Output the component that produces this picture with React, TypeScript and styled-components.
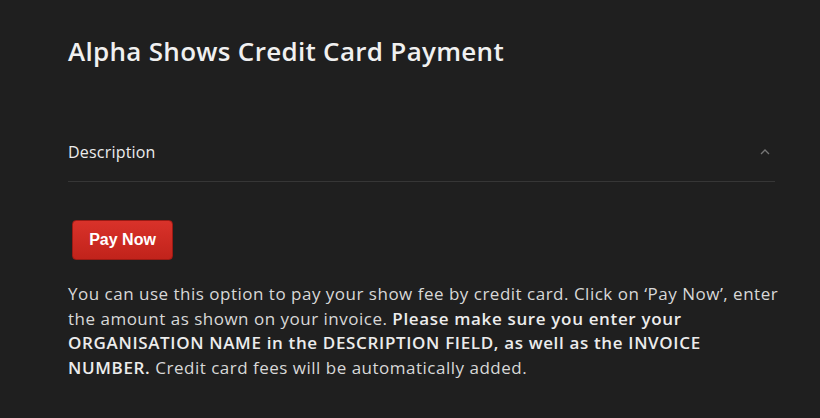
import React from "react";
import styled, { createGlobalStyle } from "styled-components";

const Global = createGlobalStyle`
  html, body { margin: 0; padding: 0; background: #1f1f1f; }
  body { font-family: "Open Sans", "Noto Sans", sans-serif; color: #e6e6e6; }
`;

const Page = styled.div`
  padding: 34px 45px 0 68px;
  width: 820px;
  box-sizing: border-box;
`;

const Title = styled.h1`
  margin: 0;
  font-size: 26px;
  font-weight: 600;
  color: #f0f0f0;
  letter-spacing: 0.3px;
  line-height: 34px;
`;

const AccordionHeader = styled.div`
  margin-top: 73px;
  display: flex;
  align-items: center;
  justify-content: space-between;
  padding: 0 4px 18px 0;
  border-bottom: 1px solid #363636;
`;

const AccordionLabel = styled.span`
  font-size: 16px;
  color: #ececec;
  letter-spacing: 0.2px;
  line-height: 22px;
`;

const Chevron = styled.svg`
  width: 12px;
  height: 12px;
  color: #777;
`;

const ButtonRow = styled.div`
  padding: 38px 0 0 4px;
`;

const PayButton = styled.button`
  width: 101px;
  height: 40px;
  border-radius: 4px;
  border: 1px solid #9a1a14;
  background: linear-gradient(#d9322a, #c1231b);
  color: #fff;
  font-family: "Liberation Sans", Arial, sans-serif;
  font-weight: 700;
  font-size: 16px;
  cursor: pointer;
`;

const Body = styled.p`
  margin: 22px 0 0;
  font-size: 17px;
  line-height: 24.5px;
  color: #d8d8d8;
  letter-spacing: 0.5px;
  width: 714px;
  b { font-weight: 600; color: #ececec; letter-spacing: 0.65px; }
`;

export default function App() {
  return (
    <>
      <Global />
      <Page>
        <Title>Alpha Shows Credit Card Payment</Title>
        <AccordionHeader>
          <AccordionLabel>Description</AccordionLabel>
          <Chevron viewBox="0 0 12 12" fill="none" stroke="currentColor" strokeWidth="1.3">
            <path d="M2 8 L6 4 L10 8" />
          </Chevron>
        </AccordionHeader>
        <ButtonRow>
          <PayButton>Pay Now</PayButton>
        </ButtonRow>
        <Body>
          You can use this option to pay your show fee by credit card. Click on ‘Pay Now’, enter the amount as shown on your invoice.{" "}
          <b>Please make sure you enter your ORGANISATION NAME in the DESCRIPTION FIELD, as well as the INVOICE NUMBER.</b>{" "}
          Credit card fees will be automatically added.
        </Body>
      </Page>
    </>
  );
}
